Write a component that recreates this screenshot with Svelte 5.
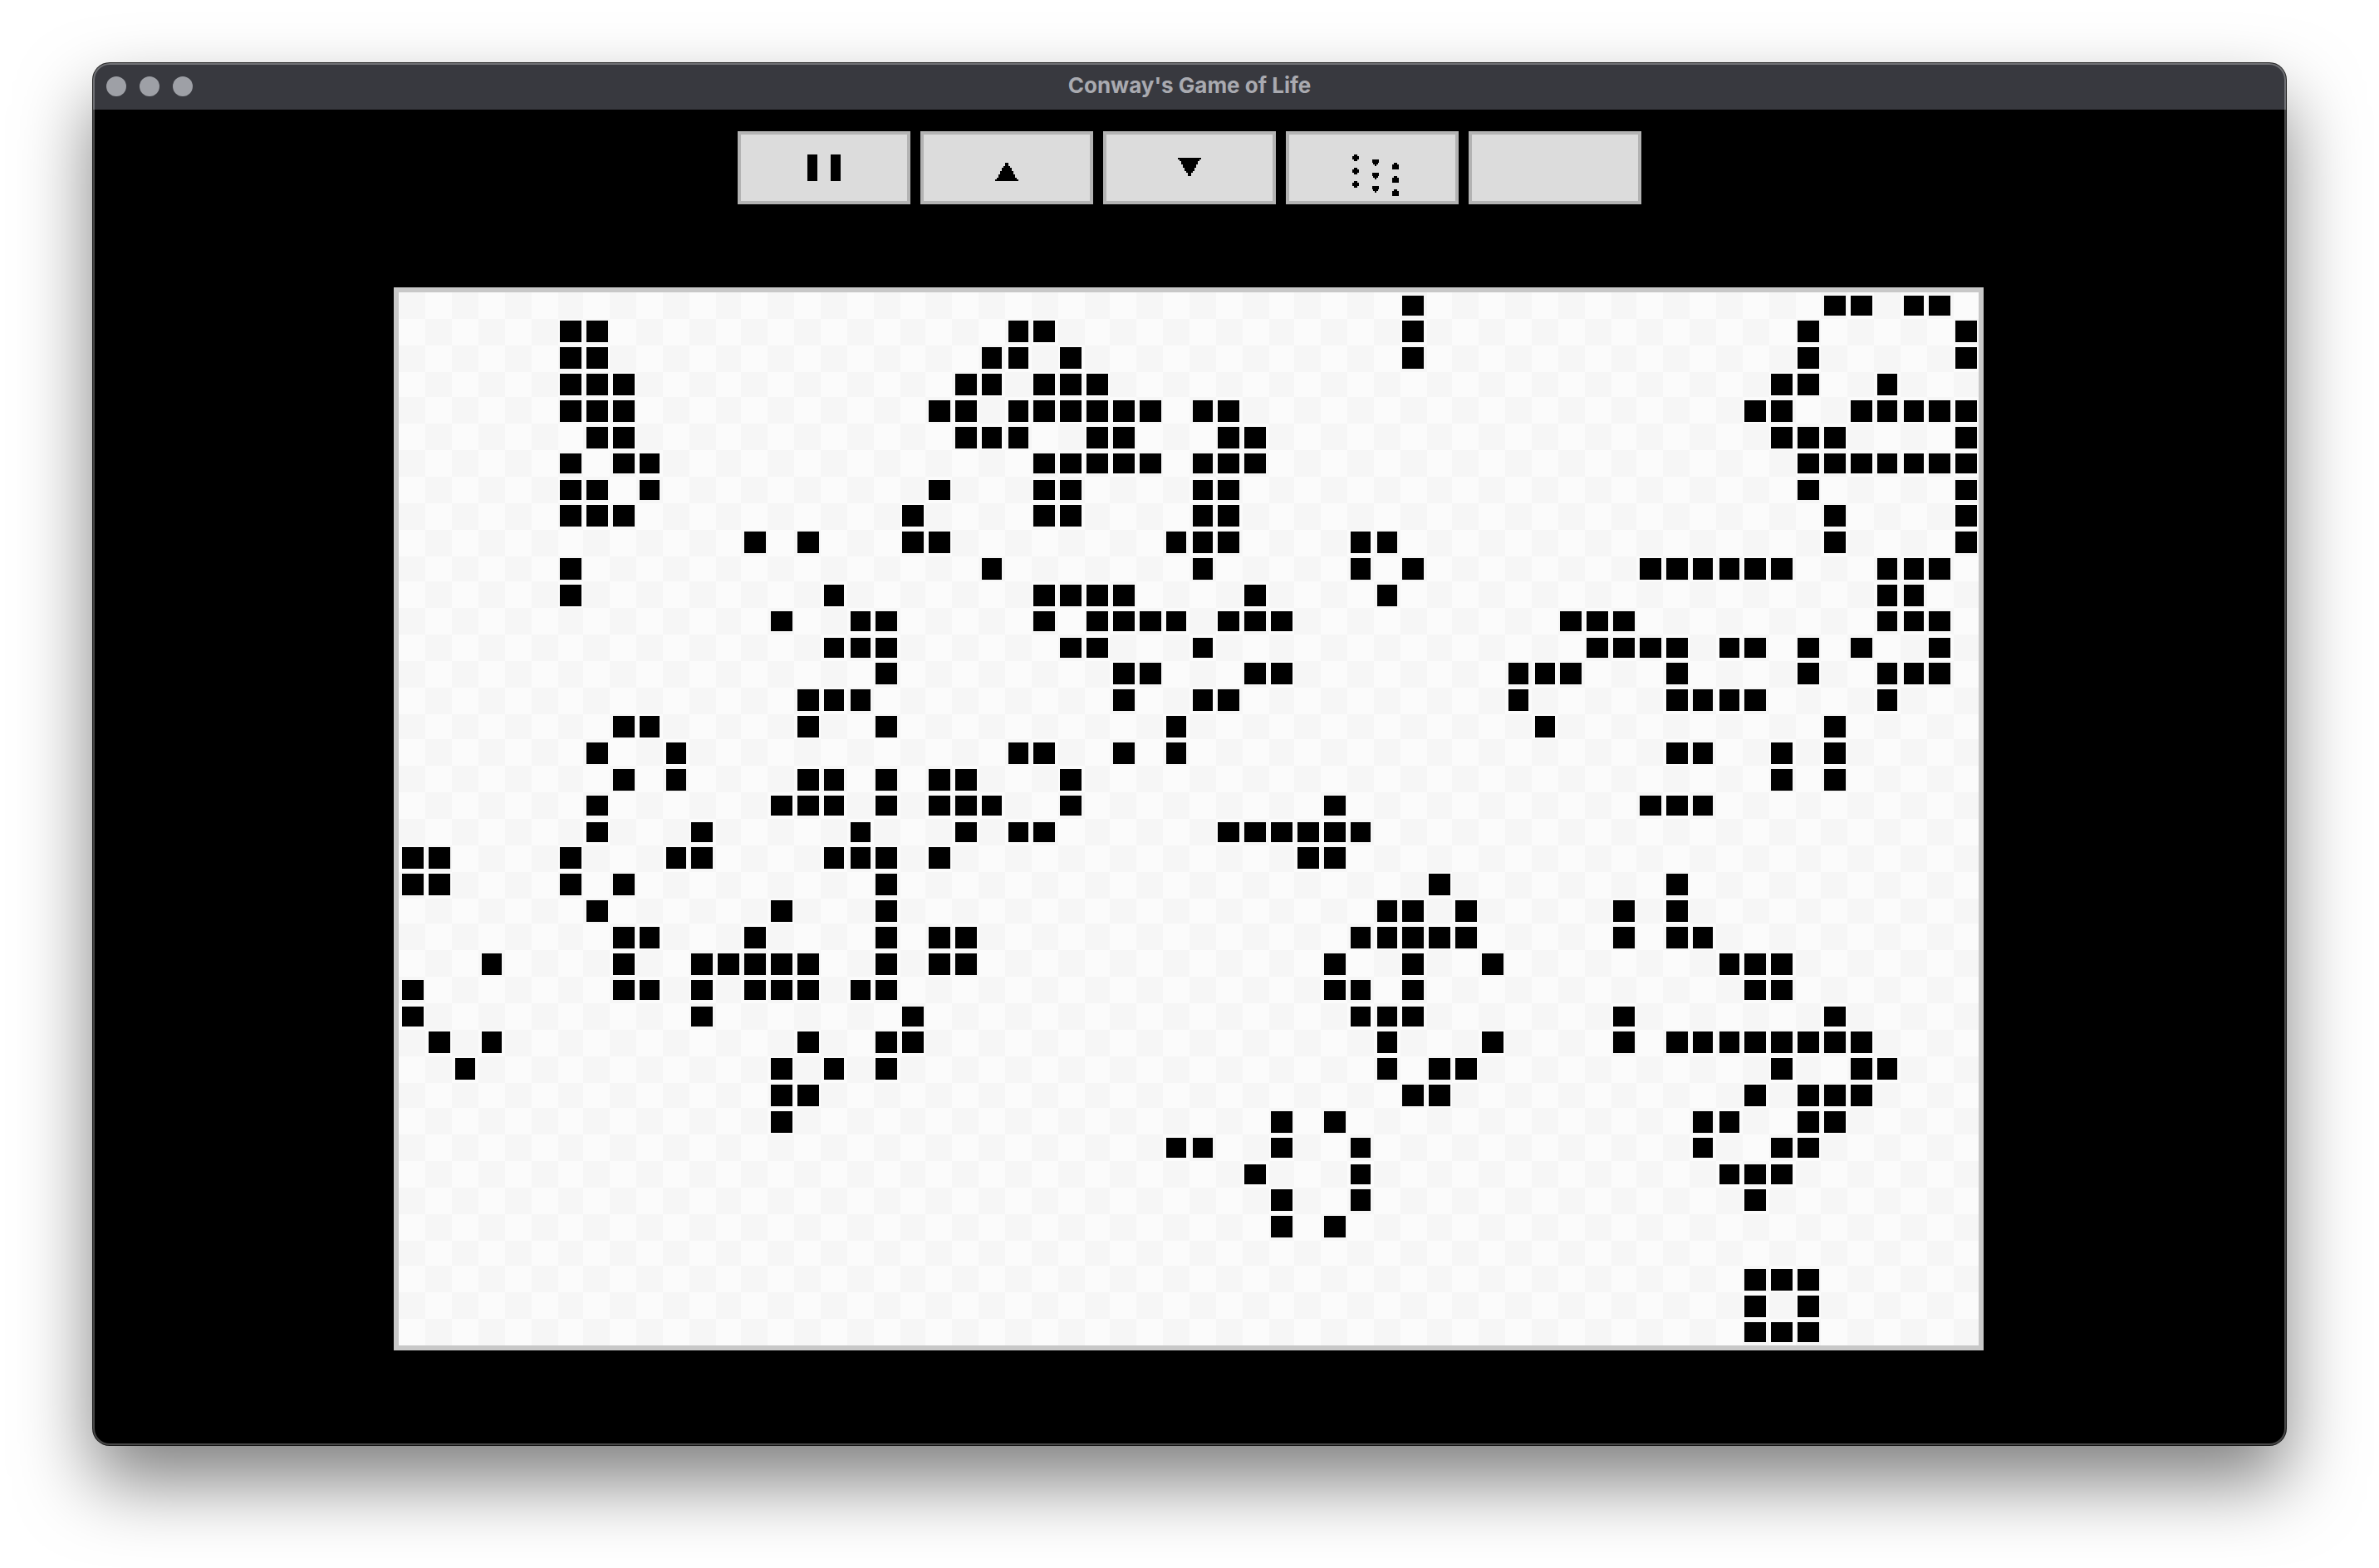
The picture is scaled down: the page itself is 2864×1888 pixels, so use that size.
<script>
  const LIVE = {
    0: [38, 54, 55, 57, 58],
    1: [6, 7, 23, 24, 38, 53, 59],
    2: [6, 7, 22, 23, 25, 38, 53, 59],
    3: [6, 7, 8, 21, 22, 24, 25, 26, 52, 53, 56],
    4: [6, 7, 8, 20, 21, 23, 24, 25, 26, 27, 28, 30, 31, 51, 52, 55, 56, 57, 58, 59],
    5: [7, 8, 21, 22, 23, 26, 27, 31, 32, 52, 53, 54, 59],
    6: [6, 8, 9, 24, 25, 26, 27, 28, 30, 31, 32, 53, 54, 55, 56, 57, 58, 59],
    7: [6, 7, 9, 20, 24, 25, 30, 31, 53, 59],
    8: [6, 7, 8, 19, 24, 25, 30, 31, 54, 59],
    9: [13, 15, 19, 20, 29, 30, 31, 36, 37, 54, 59],
    10: [6, 22, 30, 36, 38, 47, 48, 49, 50, 51, 52, 56, 57, 58],
    11: [6, 16, 24, 25, 26, 27, 32, 37, 56, 57],
    12: [14, 17, 18, 24, 26, 27, 28, 29, 31, 32, 33, 44, 45, 46, 56, 57, 58],
    13: [16, 17, 18, 25, 26, 30, 45, 46, 47, 48, 50, 51, 53, 55, 58],
    14: [18, 27, 28, 32, 33, 42, 43, 44, 48, 53, 56, 57, 58],
    15: [15, 16, 17, 27, 30, 31, 42, 48, 49, 50, 51, 56],
    16: [8, 9, 15, 18, 29, 43, 54],
    17: [7, 10, 23, 24, 27, 29, 48, 49, 52, 54],
    18: [8, 10, 15, 16, 18, 20, 21, 25, 52, 54],
    19: [7, 14, 15, 16, 18, 20, 21, 22, 25, 35, 47, 48, 49],
    20: [7, 11, 17, 21, 23, 24, 31, 32, 33, 34, 35, 36],
    21: [0, 1, 6, 10, 11, 16, 17, 18, 20, 34, 35],
    22: [0, 1, 6, 8, 18, 39, 48],
    23: [7, 14, 18, 37, 38, 40, 46, 48],
    24: [8, 9, 13, 18, 20, 21, 36, 37, 38, 39, 40, 46, 48, 49],
    25: [3, 8, 11, 12, 13, 14, 15, 18, 20, 21, 35, 38, 41, 50, 51, 52],
    26: [0, 8, 9, 11, 13, 14, 15, 17, 18, 35, 36, 38, 51, 52],
    27: [0, 11, 19, 36, 37, 38, 46, 54],
    28: [1, 3, 15, 18, 19, 37, 41, 46, 48, 49, 50, 51, 52, 53, 54, 55],
    29: [2, 14, 16, 18, 37, 39, 40, 52, 55, 56],
    30: [14, 15, 38, 39, 51, 53, 54, 55],
    31: [14, 33, 35, 49, 50, 53, 54],
    32: [29, 30, 33, 36, 49, 52, 53],
    33: [32, 36, 50, 51, 52],
    34: [33, 36, 51],
    35: [33, 35],
    37: [51, 52, 53],
    38: [51, 53],
    39: [51, 52, 53],
  };

  const COLS = 60;
  const ROWS = 40;
  const PITCH = 15.85;
  const INSET_X = 2.08;
  const INSET_Y = 1.58;
  const SIZE = 12.7;

  // The board is laid out on whole CSS pixels of a 2x capture, so every edge lands on an even pixel.
  const snap = (v) => 2 * Math.round(v);
  const edges = (count, origin) =>
    Array.from({ length: count + 1 }, (_, n) => snap(origin + PITCH * n));
  const tracks = (e) =>
    e.slice(1).map((v, i) => `${v - e[i]}px`).join(' ');

  const colEdges = edges(COLS, 0.45);
  const rowEdges = edges(ROWS, 0);
  const columns = tracks(colEdges);
  const rowsTemplate = tracks(rowEdges);

  const cells = [];
  for (let r = 0; r < ROWS; r++) {
    for (let c = 0; c < COLS; c++) {
      const isLive = (LIVE[r] || []).includes(c);
      const cell = { key: `${r}-${c}`, dark: (r + c) % 2 === 0, live: null };
      if (isLive) {
        const left = snap(INSET_X + PITCH * c);
        const right = snap(INSET_X + PITCH * c + SIZE);
        const top = snap(INSET_Y + PITCH * r);
        const bottom = snap(INSET_Y + PITCH * r + SIZE);
        cell.live = `margin-left:${left - colEdges[c]}px;margin-top:${top - rowEdges[r]}px;width:${right - left}px;height:${bottom - top}px`;
      }
      cells.push(cell);
    }
  }

  // Pixel icons: each entry is the width of one 2px-tall row, centred on cx.
  const stair = (cx, y, widths) =>
    widths
      .map((w, i) => `M${cx - w / 2} ${y + i * 2}h${w}v2h${-w}z`)
      .join('');

  const upPath = stair(100, 34, [4, 4, 8, 12, 12, 16, 16, 20, 20, 24, 28]);
  const downPath = stair(100, 28, [28, 24, 20, 20, 16, 16, 12, 12, 8, 4, 4]);

  const ROUND = [4, 8, 8, 4];
  const DOWNWARD = [8, 8, 6, 2];
  const UPWARD = [4, 8, 8, 8];
  const stepPath = [
    ...[24, 40, 56].map((y) => stair(80, y, ROUND)),
    ...[30, 46, 62].map((y) => stair(104, y, DOWNWARD)),
    ...[34, 50, 66].map((y) => stair(128, y, UPWARD)),
  ].join('');
</script>

<div class="page">
  <div class="window">
    <header class="titlebar">
      <div class="lights">
        <span class="light"></span>
        <span class="light"></span>
        <span class="light"></span>
      </div>
      <div class="title">Conway's Game of Life</div>
      <div></div>
    </header>

    <div class="content">
      <div class="toolbar">
        <button class="btn" aria-label="Pause">
          <svg viewBox="0 0 200 80" width="200" height="80">
            <path d="M80 24h12v32h-12zM108 24h12v32h-12z" />
          </svg>
        </button>
        <button class="btn" aria-label="Faster">
          <svg viewBox="0 0 200 80" width="200" height="80"><path d={upPath} /></svg>
        </button>
        <button class="btn" aria-label="Slower">
          <svg viewBox="0 0 200 80" width="200" height="80"><path d={downPath} /></svg>
        </button>
        <button class="btn" aria-label="Randomize">
          <svg viewBox="0 0 200 80" width="200" height="80"><path d={stepPath} /></svg>
        </button>
        <button class="btn" aria-label="Clear"></button>
      </div>

      <div
        class="board"
        style="grid-template-columns:{columns};grid-template-rows:{rowsTemplate}"
      >
        {#each cells as cell (cell.key)}
          <div class="cell" class:dark={cell.dark}>
            {#if cell.live}<div class="live" style={cell.live}></div>{/if}
          </div>
        {/each}
      </div>
    </div>
  </div>
</div>

<style>
  :global(body) {
    margin: 0;
    background: #fff;
  }

  .page {
    width: 2864px;
    height: 1888px;
    box-sizing: border-box;
    padding: 76px 112px 0;
    overflow: hidden;
  }

  .window {
    position: relative;
    width: 2640px;
    height: 1664px;
    border-radius: 20px;
    background: #000;
    display: flex;
    flex-direction: column;
    box-shadow:
      0 0 0 1px rgba(0, 0, 0, 0.85),
      0 44px 88px rgba(0, 0, 0, 0.5);
  }

  .window::after {
    content: '';
    position: absolute;
    inset: 0;
    border-radius: 20px;
    box-shadow: inset 0 0 0 2px rgba(255, 255, 255, 0.28);
    pointer-events: none;
  }

  .titlebar {
    height: 56px;
    flex: none;
    background: #38393f;
    border-radius: 20px 20px 0 0;
    display: grid;
    grid-template-columns: 1fr auto 1fr;
    align-items: center;
  }

  .lights {
    display: flex;
    gap: 16px;
    padding-left: 16px;
  }

  .light {
    width: 24px;
    height: 24px;
    border-radius: 50%;
    background: #9ea0a6;
  }

  .title {
    font-family: Inter, 'Liberation Sans', sans-serif;
    font-weight: 700;
    font-size: 26px;
    line-height: 30px;
    padding-bottom: 2px;
    color: #a9aab0;
    white-space: nowrap;
  }

  .content {
    flex: 1;
    display: flex;
    flex-direction: column;
  }

  .toolbar {
    display: flex;
    justify-content: center;
    gap: 12px;
    margin-top: 26px;
  }

  .btn {
    width: 208px;
    height: 88px;
    box-sizing: border-box;
    border: 4px solid #b3b3b3;
    border-radius: 0;
    background: #dcdcdc;
    padding: 0;
    margin: 0;
    display: block;
  }

  .btn svg {
    display: block;
    fill: #000;
    shape-rendering: crispEdges;
  }

  .board {
    display: grid;
    width: max-content;
    margin: 100px 0 0 362px;
    border: 6px solid #c8c8c8;
  }

  .cell {
    background: #fbfbfb;
    min-width: 0;
    min-height: 0;
  }

  .cell.dark {
    background: #f6f6f6;
  }

  .live {
    background: #000;
  }
</style>
